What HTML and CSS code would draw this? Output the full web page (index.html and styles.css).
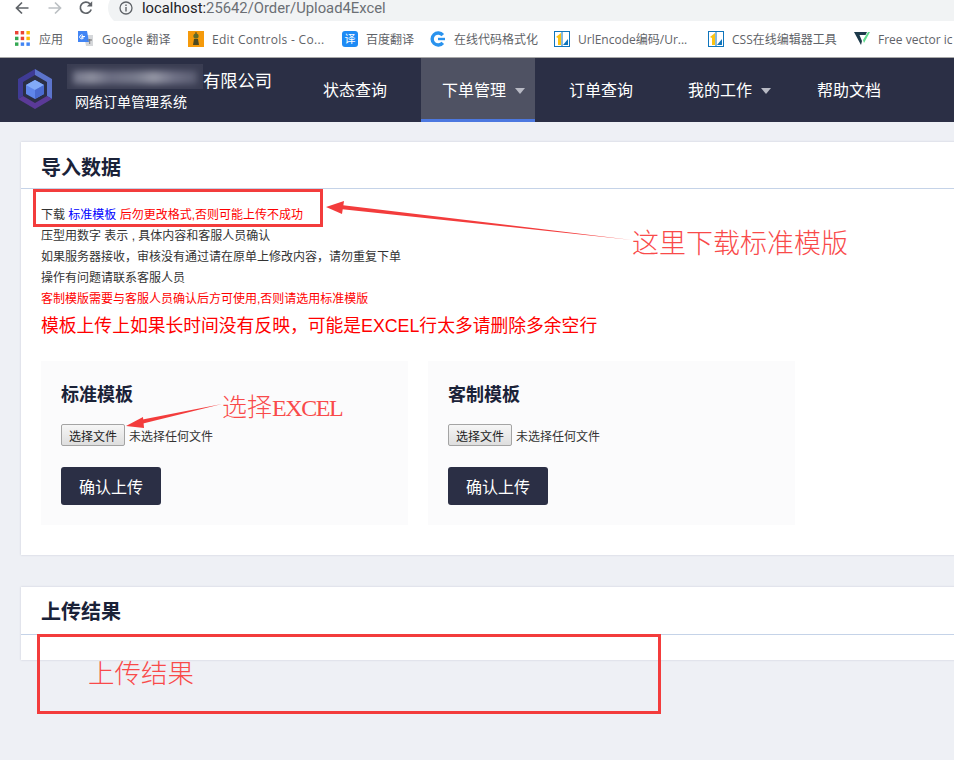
FILE: index.html
```html
<!DOCTYPE html>
<html lang="zh-CN">
<head>
    <meta charset="UTF-8">
    <meta name="viewport" content="width=device-width, initial-scale=1.0">
    <title>导入数据</title>
    <link rel="stylesheet" href="styles.css">
</head>
<body>
    <!-- Browser toolbar -->
    <div class="toolbar">
        <div class="toolbar-row">
            <svg class="tool-icon tool-back" viewBox="0 0 16 16"><path d="M14.5 8H2.5M8 2.5L2.5 8L8 13.5" fill="none" stroke="#5f6368" stroke-width="1.7"/></svg>
            <svg class="tool-icon tool-forward" viewBox="0 0 16 16"><path d="M1.5 8H13.5M8 2.5L13.5 8L8 13.5" fill="none" stroke="#bcc0c4" stroke-width="1.7"/></svg>
            <svg class="tool-icon tool-reload" viewBox="0 0 16 16"><path d="M13.2 9.5A5.6 5.6 0 1 1 12 3.8" fill="none" stroke="#5f6368" stroke-width="1.7"/><path d="M14.2 1.2V6.6H8.8Z" fill="#5f6368"/></svg>
            <div class="address">
                <svg class="info-icon" viewBox="0 0 14 14"><circle cx="7" cy="7" r="6" fill="none" stroke="#5f6368" stroke-width="1.3"/><path d="M7 6V10.4M7 3.6V5" stroke="#5f6368" stroke-width="1.4"/></svg>
                <span class="host">localhost:</span><span class="url-path">25642/Order/Upload4Excel</span>
            </div>
        </div>
    </div>

    <div class="bookmarks">
        <div class="bookmark mark-apps">
            <svg viewBox="0 0 14 14"><g>
                <rect x="0" y="0" width="3" height="3" fill="#ea4335"/><rect x="5" y="0" width="3" height="3" fill="#ea4335"/><rect x="10" y="0" width="3" height="3" fill="#fbbc05"/>
                <rect x="0" y="5" width="3" height="3" fill="#34a853"/><rect x="5" y="5" width="3" height="3" fill="#ea4335"/><rect x="10" y="5" width="3" height="3" fill="#fbbc05"/>
                <rect x="0" y="10" width="3" height="3" fill="#34a853"/><rect x="5" y="10" width="3" height="3" fill="#4285f4"/><rect x="10" y="10" width="3" height="3" fill="#4285f4"/>
            </g></svg>
            <span>应用</span>
        </div>
        <div class="bookmark mark-google">
            <svg viewBox="0 0 16 16"><path d="M6 4H15V15H8Z" fill="#d5d7da"/><path d="M0 0H9L11 11H0Z" fill="#4285f4"/><path d="M7 5.5H3.8V6.8H5.5A2 2 0 1 1 5 4.4" fill="none" stroke="#fff" stroke-width="1"/><path d="M9.5 9H14M11.7 8V13" stroke="#777" stroke-width="1"/></svg>
            <span>Google 翻译</span>
        </div>
        <div class="bookmark mark-edit">
            <svg viewBox="0 0 16 16"><rect width="16" height="16" fill="#f59a0b"/><circle cx="8" cy="5" r="2.6" fill="#5f6b2c"/><path d="M6 8H10L11 14H5Z" fill="#4c4a22"/><path d="M8 1V3" stroke="#4c4a22"/></svg>
            <span>Edit Controls - Co...</span>
        </div>
        <div class="bookmark mark-baidu">
            <div class="baidu-icon">译</div>
            <span>百度翻译</span>
        </div>
        <div class="bookmark mark-code">
            <svg viewBox="0 0 16 16"><path d="M12.8 4.2A6 6 0 1 0 12.8 11.8" fill="none" stroke="#2a93ee" stroke-width="3.4"/><path d="M8 8H15" stroke="#2a93ee" stroke-width="2.4"/></svg>
            <span>在线代码格式化</span>
        </div>
        <div class="bookmark mark-url">
            <svg viewBox="0 0 16 16"><rect x="0.5" y="0.5" width="15" height="15" fill="#fff" stroke="#0f75bc"/><path d="M2 6L7 2V14H4V7Z" fill="#fbc311"/><path d="M9 14L14 8V14Z" fill="#0f75bc"/><path d="M8 1V15" stroke="#0f75bc"/></svg>
            <span>UrlEncode编码/Ur...</span>
        </div>
        <div class="bookmark mark-css">
            <svg viewBox="0 0 16 16"><rect x="0.5" y="0.5" width="15" height="15" fill="#fff" stroke="#0f75bc"/><path d="M2 6L7 2V14H4V7Z" fill="#fbc311"/><path d="M9 14L14 8V14Z" fill="#0f75bc"/><path d="M8 1V15" stroke="#0f75bc"/></svg>
            <span>CSS在线编辑器工具</span>
        </div>
        <div class="bookmark mark-free">
            <svg viewBox="0 0 16 16"><path d="M0 1H13L11.5 4H5.5L8 10L7 14Z" fill="#1c3a4a"/><path d="M9 9L14 1H16L10 12Z" fill="#5fdc8c"/></svg>
            <span>Free vector ic</span>
        </div>
    </div>

    <!-- Site navigation -->
    <nav class="nav">
        <div class="brand">
            <svg class="logo" viewBox="0 0 36 40">
                <path d="M18 0L35 10V30L30 27V13L18 6Z" fill="#5c74cc"/>
                <path d="M18 0L1 10V30L6 27V13L18 6Z" fill="#3f3b95"/>
                <path d="M1 30L18 40L35 30L30 27L18 34L6 27Z" fill="#5b3a98"/>
                <path d="M18 11L27 16V25L18 30L9 25V16Z" fill="#5f86ea"/>
                <path d="M18 11L27 16L18 21L9 16Z" fill="#82aaf8"/>
                <path d="M18 21L27 16V25L18 30Z" fill="#4a6bd0"/>
            </svg>
            <div class="brand-text">
                <div class="brand-top"><div class="blur-box"><div class="blur-text"></div></div><span class="company">有限公司</span></div>
                <div class="system-name">网络订单管理系统</div>
            </div>
        </div>
        <div class="nav-items">
            <a class="nav-item">状态查询</a>
            <a class="nav-item has-caret active">下单管理<i class="caret"></i></a>
            <a class="nav-item">订单查询</a>
            <a class="nav-item has-caret">我的工作<i class="caret"></i></a>
            <a class="nav-item">帮助文档</a>
        </div>
    </nav>

    <div class="page">
        <section class="card">
            <h2 class="card-title">导入数据</h2>
            <div class="card-body">
                <p class="note">下载 <a class="template-link">标准模板</a> <span class="red">后勿更改格式,否则可能上传不成功</span></p>
                <p class="note">压型用数字 表示 , 具体内容和客服人员确认</p>
                <p class="note">如果服务器接收，审核没有通过请在原单上修改内容，请勿重复下单</p>
                <p class="note">操作有问题请联系客服人员</p>
                <p class="note red">客制模版需要与客服人员确认后方可使用,否则请选用标准模版</p>
                <p class="big-note">模板上传上如果长时间没有反映，可能是EXCEL行太多请删除多余空行</p>

                <div class="panels">
                    <div class="panel">
                        <h3 class="panel-title">标准模板</h3>
                        <div class="file-row"><button class="file-button">选择文件</button><span class="file-name">未选择任何文件</span></div>
                        <button class="upload-button">确认上传</button>
                    </div>
                    <div class="panel">
                        <h3 class="panel-title">客制模板</h3>
                        <div class="file-row"><button class="file-button">选择文件</button><span class="file-name">未选择任何文件</span></div>
                        <button class="upload-button">确认上传</button>
                    </div>
                </div>
            </div>
        </section>

        <section class="card result-card">
            <h2 class="card-title">上传结果</h2>
            <div class="result-body"></div>
        </section>
    </div>

    <!-- Red annotations drawn over the screenshot -->
    <div class="mark-box box-download"></div>
    <div class="mark-box box-result"></div>
    <svg class="arrows" viewBox="0 0 954 760">
        <path d="M632 240L340 209L341 205Z" fill="#f33c3c"/>
        <path d="M326 207L344 201L342 214Z" fill="#f33c3c"/>
        <path d="M222 404L140 420L141 424Z" fill="#f33c3c"/>
        <path d="M126 426L143 417L144 428Z" fill="#f33c3c"/>
    </svg>
    <div class="mark-text text-download">这里下载标准模版</div>
    <div class="mark-text text-excel">选择<span class="mark-latin">EXCEL</span></div>
    <div class="mark-text text-result">上传结果</div>
</body>
</html>
```

FILE: styles.css
```css
html, body {
    height: 100%;
}
body {
    margin: 0;
    position: relative;
    overflow: hidden;
    background-color: #eef0f5;
    font-family: "Liberation Sans", "Noto Sans CJK SC", sans-serif;
    font-size: 14px;
    color: #333;
}
/* Browser chrome */
.toolbar {
    height: 21px;
    background-color: #fff;
    overflow: hidden;
}
.toolbar-row {
    display: flex;
    align-items: center;
    height: 34px;
    margin-top: -9px;
}
.tool-icon {
    width: 16px;
    height: 16px;
    flex: none;
}
.tool-back {
    margin-left: 14px;
}
.tool-forward {
    margin-left: 17px;
}
.tool-reload {
    margin-left: 15px;
}
.address {
    display: flex;
    align-items: center;
    flex: 1;
    height: 34px;
    margin-left: 14px;
    padding-left: 11px;
    background-color: #f1f3f4;
    border-radius: 17px 0 0 17px;
    font-family: "Roboto", sans-serif;
    font-size: 14.8px;
}
.info-icon {
    width: 14px;
    height: 14px;
    margin-right: 9px;
}
.host {
    color: #202124;
}
.url-path {
    color: #6b6f74;
}
.bookmarks {
    display: flex;
    align-items: center;
    height: 36px;
    background-color: #fff;
    border-bottom: 1px solid #a8a8a8;
    box-sizing: content-box;
    font-family: "Open Sans", "Noto Sans CJK SC", sans-serif;
    font-size: 12px;
    color: #5f6368;
    overflow: hidden;
    white-space: nowrap;
}
.bookmark {
    display: flex;
    align-items: center;
    flex: none;
    gap: 8px;
}
.bookmark svg, .baidu-icon {
    width: 16px;
    height: 16px;
    flex: none;
}
.mark-apps {
    margin-left: 15px;
    width: 63px;
}
.mark-google {
    width: 110px;
    letter-spacing: 0.25px;
}
.mark-edit {
    width: 154px;
    letter-spacing: 0.3px;
}
.mark-baidu {
    width: 88px;
}
.mark-code {
    width: 124px;
}
.mark-url {
    width: 154px;
}
.mark-css {
    width: 146px;
}
.baidu-icon {
    background-color: #1e8bf5;
    border-radius: 3px;
    color: #fff;
    font-size: 11px;
    line-height: 16px;
    text-align: center;
}
/* Site nav */
.nav {
    display: flex;
    height: 64px;
    background-color: #2b2f45;
    color: #fff;
}
.brand {
    display: flex;
    width: 302px;
    flex: none;
}
.logo {
    width: 36px;
    height: 40px;
    margin: 11px 0 0 17px;
}
.brand-text {
    margin-left: 14px;
}
.brand-top {
    display: flex;
    height: 29px;
    margin-top: 6px;
}
.blur-box {
    width: 136px;
    height: 25px;
    background-color: #3a3d52;
    overflow: hidden;
}
.blur-text {
    height: 13px;
    margin: 7px 6px;
    background: linear-gradient(90deg, #74768a, #8d8f9f 15%, #6b6d82 30%, #777a8c 50%, #9597a6 65%, #6f7186 82%, #5a5d72);
    filter: blur(3px);
}
.company {
    font-size: 17.3px;
    line-height: 24px;
    margin-top: 5px;
}
.system-name {
    margin: 0 0 0 8px;
    font-size: 14px;
    line-height: 18px;
}
.nav-items {
    display: flex;
    gap: 13px;
}
.nav-item {
    display: flex;
    align-items: center;
    padding: 1px 21px 0;
    font-size: 16px;
    box-sizing: border-box;
    border-bottom: 3px solid transparent;
}
.nav-item.has-caret {
    padding-right: 11px;
}
.nav-item.active {
    background-color: #4f5263;
    border-bottom-color: #4c78e0;
}
.nav-item:last-child {
    margin-left: 2px;
}
.caret {
    width: 0;
    height: 0;
    margin-left: 9px;
    margin-right: -1px;
    margin-top: 3px;
    border-left: 5px solid transparent;
    border-right: 5px solid transparent;
    border-top: 6px solid #b8bac4;
}
/* Cards */
.page {
    padding: 20px 0 0 21px;
}
.card {
    width: 980px;
    background-color: #fff;
    box-shadow: 0 0 2px rgba(40, 50, 90, 0.18);
}
.card-title {
    margin: 0;
    padding: 0 20px;
    height: 46px;
    line-height: 52px;
    font-size: 20px;
    font-weight: bold;
    color: #1a2238;
    border-bottom: 1px solid #c5d3e8;
    box-sizing: content-box;
}
.card-body {
    padding: 16px 20px 30px;
}
.note {
    margin: 0;
    font-size: 12px;
    line-height: 21px;
}
.red {
    color: #f00;
}
.template-link {
    color: #00f;
}
.big-note {
    margin: 2px 0 0;
    font-size: 17.8px;
    line-height: 28px;
    color: #f00;
}
.panels {
    display: flex;
    gap: 20px;
    margin-top: 21px;
}
.panel {
    width: 367px;
    height: 164px;
    padding: 21px 20px 20px;
    box-sizing: border-box;
    background-color: #fbfbfc;
}
.panel-title {
    margin: 0;
    font-size: 18px;
    line-height: 26px;
    font-weight: bold;
    color: #1a2238;
}
.file-row {
    display: flex;
    align-items: center;
    margin-top: 16px;
}
.file-button {
    width: 64px;
    height: 22px;
    padding: 0;
    background: linear-gradient(#f6f6f6, #dedede);
    border: 1px solid #a4a4a4;
    border-radius: 2px;
    font-family: inherit;
    font-size: 12px;
    color: #222;
}
.file-name {
    margin-left: 4px;
    font-size: 12px;
}
.upload-button {
    display: block;
    width: 100px;
    height: 38px;
    margin-top: 21px;
    background-color: #2b2f45;
    border: none;
    border-radius: 3px;
    font-family: inherit;
    font-size: 16px;
    color: #fff;
}
.result-card {
    margin-top: 32px;
}
.result-card .card-title {
    height: 47px;
    line-height: 50px;
}
.result-body {
    height: 25px;
}
/* Annotations */
.mark-box {
    position: absolute;
    box-sizing: border-box;
    border: 3px solid #f33c3c;
}
.box-download {
    left: 33px;
    top: 189px;
    width: 290px;
    height: 38px;
}
.box-result {
    left: 37px;
    top: 634px;
    width: 624px;
    height: 80px;
}
.arrows {
    position: absolute;
    left: 0;
    top: 0;
    width: 954px;
    height: 760px;
}
.mark-text {
    position: absolute;
    font-family: "Liberation Serif", "Noto Sans CJK SC", serif;
    font-weight: 300;
    color: #f94a4a;
    white-space: nowrap;
}
.text-download {
    left: 632px;
    top: 226px;
    font-size: 27px;
    line-height: 36px;
}
.text-excel {
    left: 222px;
    top: 391px;
    font-size: 25px;
    line-height: 34px;
}
.mark-latin {
    font-size: 24px;
    letter-spacing: -1.4px;
}
.text-result {
    left: 88px;
    top: 656px;
    font-size: 26.5px;
    line-height: 36px;
}
```
